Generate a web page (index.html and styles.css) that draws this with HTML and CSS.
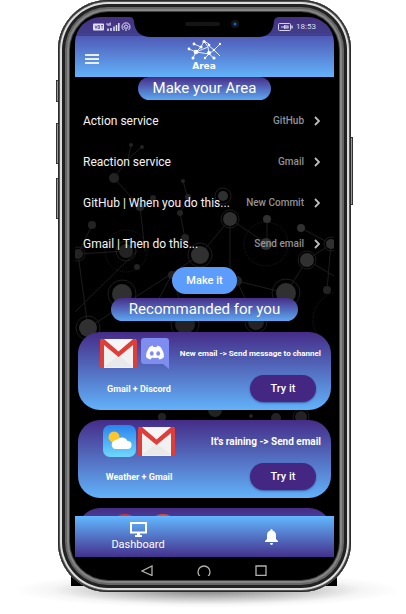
FILE: index.html
```html
<!DOCTYPE html>
<html lang="en">
<head>
<meta charset="utf-8">
<meta name="viewport" content="width=device-width, initial-scale=1">
<title>Area</title>
<link rel="stylesheet" href="styles.css">
</head>
<body>
<svg class="defs" aria-hidden="true">
  <symbol id="chevron" viewBox="0 0 6 10"><path d="M1 1l4 4-4 4" fill="none" stroke="#bdbdbd" stroke-width="1.8"/></symbol>
  <symbol id="gmail" viewBox="0 0 37 29" preserveAspectRatio="none">
    <path d="M1 0h35v29H1z" fill="#f1f1f1"/>
    <path d="M4 28L18.500 16 33 28z" fill="#e9e9e9"/>
    <path d="M4 1h29L18.500 14z" fill="#f6f6f6"/>
    <path d="M0 2Q0 0 2 0h2l14.500 12.500L33 0h2q2 0 2 2v27h-4V6L18.500 18 4 6v23H0z" fill="#df3d3a"/>
  </symbol>
</svg>
<div class="stage">
  <div class="device">
    <i class="key key-mute"></i><i class="key key-up"></i><i class="key key-down"></i><i class="key key-power"></i>
    <div class="phone">
      <div class="screen">
        <div class="status">
          <svg width="38" height="10" viewBox="0 0 38 10" aria-hidden="true">
            <rect x="0" y="1.500" width="11" height="7" rx="1" fill="#e6e2f5"/>
            <path d="M2 3.500l1 3 1-3M5 3.500v3h1.500v-3zM8 3.500h2M9 3.500v3" fill="none" stroke="#58489a" stroke-width=".8"/>
            <path d="M14 1v2h2M16 1v3M18 1h-1v2h1" fill="none" stroke="#e6e2f5" stroke-width=".8"/>
            <path d="M15 9V6.500M18 9V6M21 9V4.500M23.500 9V3M25.800 9V1" stroke="#e6e2f5" stroke-width="1.500"/>
            <g fill="none" stroke="#e6e2f5"><path d="M30.500 8a4 4 0 1 1 5 0"/><path d="M31.600 6.500a2 2 0 1 1 2.800 0M33 5v4" /></g>
          </svg>
          <span class="clock">
            <svg width="15" height="8" viewBox="0 0 15 8" aria-hidden="true"><rect x=".5" y=".5" width="12" height="7" rx="1" fill="none" stroke="#d5d2ec"/><path d="M3 4h3l1-2v4L6 4h5M8 3h2.500M8 5h2.500" stroke="#d5d2ec" fill="#d5d2ec"/><path d="M14 2.500v3" stroke="#d5d2ec" stroke-width="1.500"/></svg>
            18:53
          </span>
        </div>
        <header class="bar">
          <button class="menu" aria-label="Menu"><svg width="14" height="10" viewBox="0 0 14 10"><path d="M0 1h14M0 5h14M0 9h14" stroke="#e8effc" stroke-width="2"/></svg></button>
          <h1 class="brand">
            <svg width="34" height="21" viewBox="0 0 34 21" aria-hidden="true">
              <g fill="none" stroke="#e4edfd" stroke-width="1">
                <path d="M2 9l7 3 5-5-7-3M9 12l-3 6M9 12l12-5-4-6-3 6M9 12l13 2 5 4M21 7l1 7 5-4-6-5M22 14l-4 4M27 10l6-6M27 10l6 6M17 1l5 3"/>
              </g>
              <g fill="#fff"><circle cx="2" cy="9" r="1.400"/><circle cx="9" cy="12" r="2.300"/><circle cx="6" cy="18" r="1.500"/><circle cx="7" cy="4" r="1.400"/><circle cx="14" cy="7" r="1.600"/><circle cx="17" cy="1.500" r="1.500"/><circle cx="22" cy="5" r="1.300"/><circle cx="22" cy="13" r="2"/><circle cx="18" cy="18" r="1.200"/><circle cx="27" cy="18" r="1.600"/><circle cx="33" cy="4" r="1.200"/><circle cx="27" cy="10" r="1.200"/></g>
            </svg>
            Area
          </h1>
        </header>
        <main class="content">
          <svg class="network" viewBox="75 77 259 439" preserveAspectRatio="xMidYMin slice" aria-hidden="true">
            <g fill="none" stroke="#1d1d1d" stroke-width="1">
              <path d="M131 145l-3 14-14 19 26 29 5 44M142 147l-14 12M183 181l5 18-8 14 5 25M92 225l-14 29 48-3M78 254l10 74 112-73 30-36 37 25v-25M230 219v55M301 228l30 16-24 16-21 33-49-12M331 244l-4 46M307 260l27 16M172 274l14 50M75 312l62-61M172 274l-18 34M256 322l-19-41"/>
              <g stroke-dasharray="1 1"><circle cx="126" cy="251" r="21"/><circle cx="266" cy="244" r="22"/><circle cx="342" cy="320" r="29"/></g>
              <circle cx="122" cy="294" r="14"/><circle cx="88" cy="328" r="12"/><circle cx="200" cy="255" r="12"/><circle cx="230" cy="219" r="9"/><circle cx="223" cy="196" r="8"/><circle cx="286" cy="293" r="14"/><circle cx="307" cy="260" r="9"/><circle cx="185" cy="324" r="14"/><circle cx="256" cy="322" r="11"/><circle cx="126" cy="251" r="10"/><circle cx="78" cy="254" r="7"/><circle cx="331" cy="244" r="7"/><circle cx="301" cy="417" r="8"/>
            </g>
            <g fill="#232323">
              <circle cx="131" cy="145" r="2"/><circle cx="142" cy="147" r="2"/><circle cx="114" cy="178" r="5"/><circle cx="140" cy="207" r="4"/><circle cx="153" cy="198" r="3"/><circle cx="183" cy="181" r="2"/><circle cx="188" cy="197" r="3"/><circle cx="180" cy="213" r="3"/><circle cx="185" cy="238" r="4"/><circle cx="92" cy="225" r="4"/><circle cx="78" cy="254" r="5"/><circle cx="126" cy="251" r="7"/><circle cx="137" cy="267" r="3"/><circle cx="172" cy="275" r="4"/><circle cx="237" cy="281" r="5"/><circle cx="327" cy="290" r="4"/><circle cx="256" cy="322" r="8"/><circle cx="185" cy="324" r="10"/><circle cx="162" cy="417" r="4"/><circle cx="215" cy="410" r="7"/><circle cx="251" cy="416" r="2"/><circle cx="276" cy="418" r="5"/><circle cx="301" cy="417" r="6"/>
            </g>
            <g fill="#303030">
              <circle cx="200" cy="255" r="9"/><circle cx="223" cy="196" r="5"/><circle cx="230" cy="219" r="7"/><circle cx="267" cy="219" r="4"/><circle cx="266" cy="244" r="6"/><circle cx="301" cy="228" r="4"/><circle cx="331" cy="244" r="5"/><circle cx="307" cy="260" r="7"/><circle cx="122" cy="294" r="10"/><circle cx="88" cy="328" r="9"/><circle cx="286" cy="293" r="10"/>
            </g>
          </svg>
          <h2 class="pill">Make your Area</h2>
          <div class="options">
            <button class="option"><span class="name">Action service</span><span class="value">GitHub</span><svg width="6" height="10"><use href="#chevron"/></svg></button>
            <button class="option"><span class="name">Reaction service</span><span class="value">Gmail</span><svg width="6" height="10"><use href="#chevron"/></svg></button>
            <button class="option"><span class="name">GitHub | When you do this...</span><span class="value">New Commit</span><svg width="6" height="10"><use href="#chevron"/></svg></button>
            <button class="option"><span class="name">Gmail | Then do this...</span><span class="value">Send email</span><svg width="6" height="10"><use href="#chevron"/></svg></button>
          </div>
          <button class="action make">Make it</button>
          <h2 class="pill wide">Recommanded for you</h2>
          <div class="cards">
            <article class="card">
              <div class="icons">
                <svg width="37" height="29" aria-hidden="true"><use href="#gmail"/></svg>
                <svg width="28" height="31" viewBox="0 0 28 31" aria-hidden="true"><path d="M3 0h22q3 0 3 3v28l-6-5H3q-3 0-3-3V3q0-3 3-3z" fill="#7f8cf0"/><path d="M8.500 9l3-1.500 1 1.500h3l1-1.500 3 1.500q3.500 4.500 3.500 10-2 2-4.500 2.500l-1.500-2q-3 1-6 0l-1.500 2Q7 21 5 19q0-5.500 3.500-10z" fill="#fff"/><g fill="#7f8cf0"><ellipse cx="10.800" cy="15.500" rx="1.900" ry="2.200"/><ellipse cx="17.200" cy="15.500" rx="1.900" ry="2.200"/></g></svg>
              </div>
              <p class="rule small">New email -&gt; Send message to channel</p>
              <h3 class="pair">Gmail + Discord</h3>
              <button class="action try">Try it</button>
            </article>
            <article class="card">
              <div class="icons tight">
                <svg width="33" height="32" viewBox="0 0 33 32" aria-hidden="true"><defs><linearGradient id="sky" x2="0" y2="1"><stop stop-color="#2b83ec"/><stop offset="1" stop-color="#6fd8fb"/></linearGradient></defs><rect width="33" height="32" rx="7" fill="url(#sky)"/><circle cx="11" cy="12" r="5.500" fill="#fdc62c"/><path d="M12 24a4.500 4.500 0 0 1-.5-8.500 4 4 0 0 1 3-1 6 6 0 0 1 10 1.500 4 4 0 0 1 0 8z" fill="#fff"/></svg>
                <svg width="37" height="29" aria-hidden="true"><use href="#gmail"/></svg>
              </div>
              <p class="rule">It's raining -&gt; Send email</p>
              <h3 class="pair">Weather + Gmail</h3>
              <button class="action try">Try it</button>
            </article>
            <article class="card">
              <div class="icons spread">
                <svg width="30" height="30" viewBox="0 0 30 30" aria-hidden="true"><circle cx="15" cy="15" r="15" fill="#e02f2f"/></svg>
                <svg width="30" height="30" viewBox="0 0 30 30" aria-hidden="true"><circle cx="15" cy="15" r="15" fill="#f04a23"/></svg>
              </div>
            </article>
          </div>
        </main>
        <nav class="tabs">
          <button class="tab"><svg width="17" height="15" viewBox="0 0 17 15" aria-hidden="true"><path d="M1 1h15v9.500H1z" fill="none" stroke="#fff" stroke-width="2"/><path d="M7 11h3v2h2v2H5v-2h2z" fill="#fff"/></svg>Dashboard</button>
          <button class="tab" aria-label="Notifications"><svg width="13" height="16" viewBox="0 0 13 16" aria-hidden="true"><path d="M6.500 0q1.200 0 1.200 1.500Q11 2.500 11 6.500V10l2 2v1H0v-1l2-2V6.500q0-4 3.300-5Q5.300 0 6.500 0zM5 14h3q0 2-1.500 2T5 14z" fill="#fff"/></svg></button>
        </nav>
        <div class="system">
          <svg width="12" height="11" viewBox="0 0 12 11" aria-hidden="true"><path d="M11 1v9.500L1 6z" fill="none" stroke="#b4b1a8" stroke-width="1.300"/></svg>
          <svg width="14" height="11" viewBox="0 0 14 11" aria-hidden="true"><circle cx="7" cy="7" r="6" fill="none" stroke="#b4b1a8" stroke-width="1.300"/></svg>
          <svg width="12" height="11" viewBox="0 0 12 11" aria-hidden="true"><path d="M1 1h10v9.500H1z" fill="none" stroke="#b4b1a8" stroke-width="1.300"/></svg>
        </div>
      </div>
      <svg class="notch" width="149" height="22" viewBox="0 0 149 22" aria-hidden="true">
        <path d="M0 0v1q3 0 4 4 1 16 17 16h107q15 0 16-16 1-4 5-4V0z" fill="#000"/>
        <rect x="55" y="6" width="35" height="4" rx="2" fill="#151515"/><circle cx="105" cy="8" r="4" fill="#11151b"/><circle cx="105" cy="8" r="1.500" fill="#1c62b4"/>
      </svg>
    </div>
  </div>
</div>
</body>
</html>
```
FILE: styles.css
```css
* { box-sizing: border-box; }

body {
  margin: 0;
  background: #fff;
  color: #fff;
  font-family: Roboto, "Liberation Sans", sans-serif;
}

button {
  padding: 0;
  border: 0;
  background: none;
  color: inherit;
  font: inherit;
}

h1, h2, h3, p { margin: 0; }
svg { display: block; flex: none; }
.defs { position: absolute; width: 0; height: 0; }

.stage {
  height: 100vh;
  padding: 0 55px 22px 58px;
  overflow: hidden;
}

.device {
  position: relative;
  z-index: 0;
  height: 100%;
}

/* soft floor shadow */
.device::before {
  content: "";
  position: absolute;
  z-index: -2;
  left: -45px;
  right: -50px;
  bottom: -16px;
  height: 36px;
  background: radial-gradient(closest-side, rgba(0, 0, 0, .5), rgba(0, 0, 0, .04) 80%, transparent);
}

/* square lower edge behind the rounded frame */
.device::after {
  content: "";
  position: absolute;
  z-index: -1;
  left: 13px;
  right: 14px;
  bottom: 6px;
  height: 40px;
  background: #000;
}

.key {
  position: absolute;
  z-index: -1;
  width: 4px;
  background: #999;
  border: 1px solid #333;
}
.key-mute { left: -2px; top: 68px; height: 19px; }
.key-mute { left: -2px; top: 80px; height: 22px; }
.key-up { left: -2px; top: 123px; height: 41px; }
.key-down { left: -2px; top: 178px; height: 41px; }
.key-power { right: -2px; top: 137px; height: 68px; }

.phone {
  position: relative;
  height: 100%;
  padding: 17px 17px 16px;
  border-radius: 50px;
  background: #000;
  box-shadow:
    inset 0 0 0 1px #2a2a2a,
    inset 0 0 0 2px #555,
    inset 0 0 0 4px #dcdcdc,
    inset 0 0 0 7px #222,
    inset 0 0 0 9px #666,
    inset 0 0 0 11px #858585,
    inset 0 0 0 12px #444;
}

.screen {
  display: flex;
  flex-direction: column;
  height: 100%;
  overflow: hidden;
  border-radius: 26px 26px 0 0;
}

.notch {
  position: absolute;
  top: 16px;
  left: 50%;
  margin-left: -75px;
}

.status {
  display: flex;
  justify-content: space-between;
  align-items: center;
  height: 19px;
  padding: 0 18px;
  background: linear-gradient(#45307f, #40408f);
}

.clock {
  display: flex;
  align-items: center;
  gap: 3px;
  color: #dcdaf0;
  font-size: 8px;
}

.bar {
  display: grid;
  grid-template-columns: 1fr auto 1fr;
  height: 41px;
  padding: 4px 11px 0 10px;
  background: linear-gradient(#5059b6, #62b2fa);
}

.menu { justify-self: start; align-self: center; }

.brand {
  display: flex;
  flex-direction: column;
  align-items: center;
  font: bold 9px/11px "DejaVu Sans", sans-serif;
}

.content {
  position: relative;
  z-index: 0;
  flex: 1;
  min-height: 0;
  display: flex;
  flex-direction: column;
  align-items: center;
  overflow: hidden;
}
.content > * { flex: none; }

.network {
  position: absolute;
  z-index: -1;
  inset: 0;
  width: 100%;
  height: 100%;
}

.pill {
  padding: 0 15px;
  border-radius: 12px;
  background: linear-gradient(#472d88, #5da8f2);
  font-size: 15px;
  font-weight: 400;
  line-height: 23px;
}
.wide { padding: 0 18px; margin-top: 4px; }

.options { align-self: stretch; }

.option {
  display: flex;
  align-items: center;
  gap: 10px;
  width: 100%;
  height: 41px;
  padding: 0 14px 0 8px;
  text-align: left;
  white-space: nowrap;
}
.name { flex: 1; font-size: 12px; color: #f4f4f4; }
.value { font-size: 10px; font-weight: 500; color: #929292; }

.action {
  height: 27px;
  border-radius: 14px;
  font-size: 11px;
  font-weight: 500;
}
.make { width: 65px; margin-top: 3px; background: #5c9dfb; }
.try {
  width: 66px;
  margin-right: 5px;
  background: #432783;
  box-shadow: 0 1px 2px rgba(30, 20, 90, .5);
}

.cards {
  align-self: stretch;
  display: grid;
  gap: 10px;
  padding: 11px 3px 0;
}

.card {
  display: grid;
  grid-template-columns: 78px 1fr;
  grid-template-rows: 32px 27px;
  gap: 6px 0;
  align-items: center;
  justify-items: end;
  padding: 5px 10px 8px 22px;
  border-radius: 22px;
  background: linear-gradient(#452c88, #62b2fa);
}

.icons {
  display: flex;
  align-items: center;
  justify-self: start;
  gap: 4px;
}
.tight { justify-self: center; gap: 2px; }
.spread { justify-self: end; gap: 8px; }

.rule { font-size: 10px; font-weight: 700; white-space: nowrap; }
.small { font-size: 8px; }
.pair { justify-self: center; font-size: 9px; font-weight: 700; white-space: nowrap; }

.tabs {
  display: grid;
  grid-template-columns: 1fr 1fr;
  gap: 7px;
  height: 41px;
  background: linear-gradient(#62b8ff, #44308c);
}

.tab {
  display: flex;
  flex-direction: column;
  align-items: center;
  justify-content: center;
  gap: 1px;
  font-size: 11px;
  line-height: 13px;
}

.system {
  display: flex;
  justify-content: center;
  align-items: flex-end;
  gap: 44px;
  height: 19px;
  padding-right: 2px;
}
```
